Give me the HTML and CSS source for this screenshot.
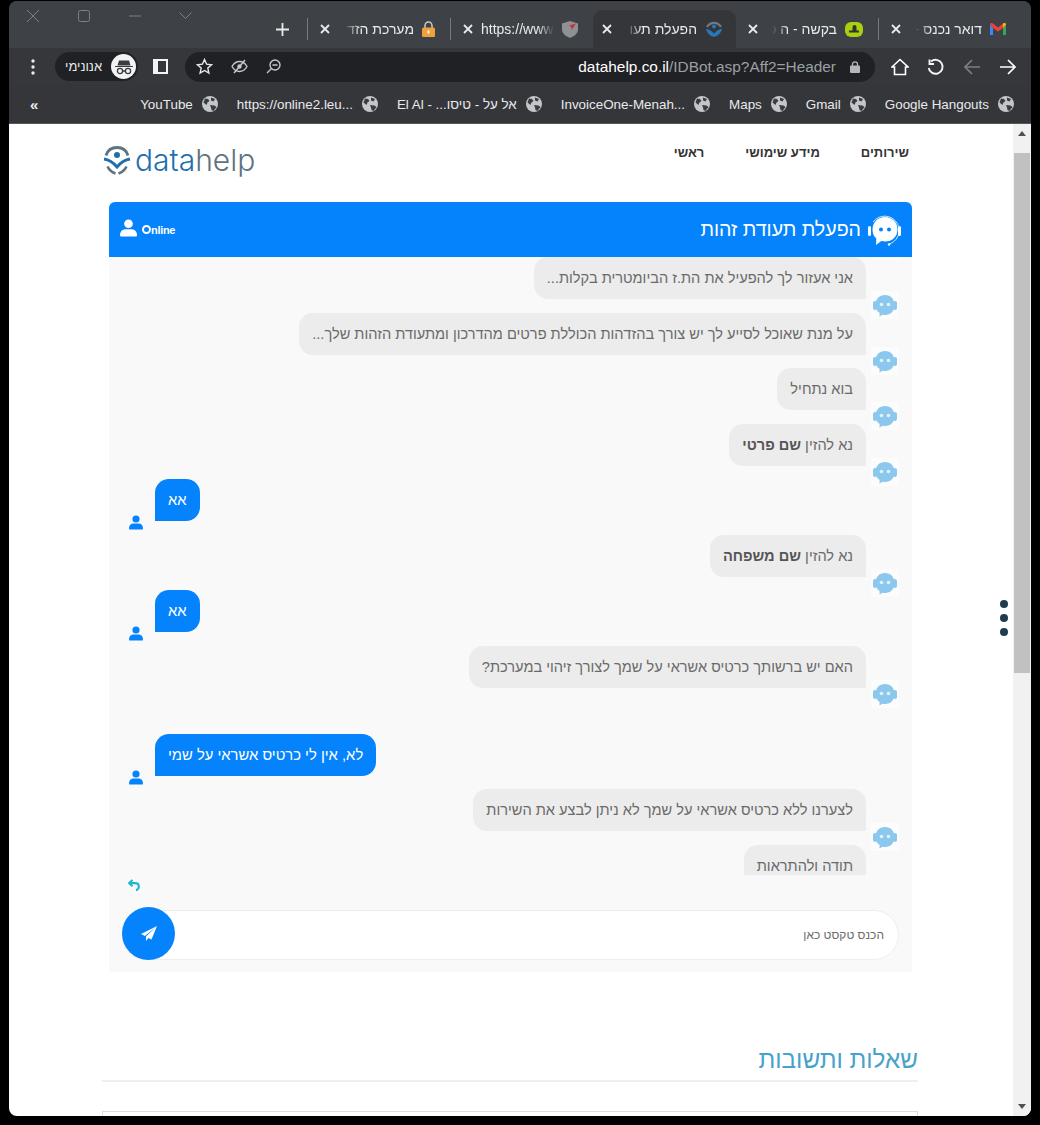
FILE: index.html
```html
<!doctype html>
<html lang="he">
<head>
  <meta charset="utf-8">
  <title>הפעלת תעודת זהות</title>
  <link rel="stylesheet" href="styles.css">
</head>
<body>
  <svg class="defs" width="0" height="0">
    <symbol id="globe" viewBox="0 0 16 16">
      <circle cx="8" cy="8" r="8" fill="#c4c7c9"/>
      <path d="M3 2.500l3 .5 1.500 2-2 1.500-1 2.500-3-2.500zM9 1.500l4 1.500-1.500 2.500-2.500-1zM8 9l4.500 .5 2 1.500-3 4-2-1-.5-2.500z" fill="#3a3c40"/>
    </symbol>
    <symbol id="close" viewBox="0 0 10 10">
      <path d="M1 1l8 8M9 1l-8 8" stroke="#e8eaed" stroke-width="1.800" fill="none"/>
    </symbol>
    <symbol id="bot" viewBox="0 0 28 28">
      <rect width="28" height="28" fill="#fff" opacity=".55"/>
      <rect x="2" y="10" width="4" height="9" rx="2" fill="#8cc8ee"/>
      <rect x="22" y="10" width="4" height="9" rx="2" fill="#8cc8ee"/>
      <path d="M14 4c5.800 0 9.500 4 9.500 10s-3.700 10-9.500 10c-.9 0-1.800-.1-2.600-.3L8.500 25.500l.1-3.400C6 20.300 4.500 17.500 4.500 14 4.500 8 8.200 4 14 4z" fill="#8cc8ee"/>
      <circle cx="10.500" cy="13.500" r="1.800" fill="#e3f1fa"/>
      <circle cx="17.500" cy="13.500" r="1.800" fill="#e3f1fa"/>
    </symbol>
    <symbol id="person" viewBox="0 0 14 15">
      <circle cx="7" cy="4" r="3.600"/>
      <path d="M1 14.500c-.8 0-1-.6-1-1.300C0 10.500 2 8.500 4.500 8.500h5c2.500 0 4.500 2 4.500 4.700 0 .7-.2 1.300-1 1.300z"/>
    </symbol>
  </svg>

  <div class="window">
    <div class="tabstrip">
      <div class="winbtn"><svg width="14" height="14" viewBox="0 0 14 14"><path d="M1 1l12 12M13 1L1 13" stroke="#7d8084" stroke-width="1" fill="none"/></svg></div>
      <div class="winbtn"><svg width="12" height="12" viewBox="0 0 12 12"><rect x=".5" y=".5" width="11" height="11" rx="2" stroke="#7d8084" fill="none"/></svg></div>
      <div class="winbtn"><svg width="12" height="2" viewBox="0 0 12 2"><path d="M0 1h12" stroke="#7d8084"/></svg></div>
      <div class="winbtn"><svg width="13" height="8" viewBox="0 0 13 8"><path d="M.5 .5l6 6 6-6" stroke="#7d8084" fill="none"/></svg></div>
      <div class="strip-space"></div>
      <svg class="plus" width="13" height="13" viewBox="0 0 13 13"><path d="M6.500 0v13M0 6.500h13" stroke="#e8eaed" stroke-width="1.800"/></svg>
      <div class="sep"></div>
      <div class="tab">
        <svg class="tab-x" width="10" height="10"><use href="#close"/></svg>
        <span class="tab-title">מערכת הזד</span>
        <svg width="13" height="16" viewBox="0 0 13 16"><path d="M3 7V4.500a3.500 3.500 0 017 0V7" stroke="#c9cbce" stroke-width="1.500" fill="none"/><rect y="6.500" width="13" height="9.500" rx="1.500" fill="#f0a13a"/><rect x="5.500" y="9.500" width="2" height="3" fill="#fff"/></svg>
      </div>
      <div class="sep"></div>
      <div class="tab">
        <svg class="tab-x" width="10" height="10"><use href="#close"/></svg>
        <span class="tab-title tab-ltr">https://www</span>
        <svg width="16" height="17" viewBox="0 0 16 17"><path d="M0 2.500L8 0l8 2.500v6c0 4-4 7-8 8.500-4-1.500-8-4.500-8-8.500z" fill="#8f9193"/><path d="M1 3.500l6 1 7-2-4 6-2-4z" fill="#c8323a"/></svg>
      </div>
      <div class="tab tab-active">
        <svg class="tab-x" width="10" height="10"><use href="#close"/></svg>
        <span class="tab-title">הפעלת תעו</span>
        <svg width="18" height="18" viewBox="0 0 18 18"><path d="M2 7a8 8 0 0114 0" stroke="#6c7a85" stroke-width="2.200" fill="none"/><circle cx="9" cy="6.500" r="2" fill="#2579b8"/><path d="M1 9c3 0 5 1.500 8 4.500C12 10.500 14 9 17 9c-1 4-4 7-8 8-4-1-7-4-8-8z" fill="#2579b8"/></svg>
      </div>
      <div class="tab">
        <svg class="tab-x" width="10" height="10"><use href="#close"/></svg>
        <span class="tab-title">בקשה - ה ט</span>
        <svg width="18" height="15" viewBox="0 0 18 15"><rect width="18" height="15" rx="6" fill="#a9cf12"/><path d="M4 10.500h10v-2h-2.500V5a2 2 0 00-4 0v3.500H4z" fill="#30352a"/></svg>
      </div>
      <div class="sep"></div>
      <div class="tab tab-last">
        <svg class="tab-x" width="10" height="10"><use href="#close"/></svg>
        <span class="tab-title">דואר נכנס -</span>
        <svg width="16" height="12" viewBox="0 0 16 12"><path d="M0 1.500V12h3V5z" fill="#4285f4"/><path d="M16 1.500V12h-3V5z" fill="#34a853"/><path d="M0 1.500C0 0 1.700-.5 3 .5L8 4.500 13 .5c1.300-1 3-.5 3 1L13 5 8 8.500 3 5z" fill="#ea4335"/><path d="M13 .5c1.300-1 3-.5 3 1L13 5z" fill="#fbbc04"/></svg>
      </div>
    </div>

    <div class="toolbar">
      <svg class="tb-dots" width="4" height="16" viewBox="0 0 4 16"><circle cx="2" cy="2" r="1.700" fill="#e8eaed"/><circle cx="2" cy="8" r="1.700" fill="#e8eaed"/><circle cx="2" cy="14" r="1.700" fill="#e8eaed"/></svg>
      <div class="incognito">
        <span>אנונימי</span>
        <div class="incog-face">
          <svg width="20" height="16" viewBox="0 0 20 16"><path d="M1 7h18v1H1zM5 1.500h10l1.500 5h-13z" fill="#3a3c40"/><circle cx="6" cy="12" r="2.600" stroke="#3a3c40" stroke-width="1.300" fill="none"/><circle cx="14" cy="12" r="2.600" stroke="#3a3c40" stroke-width="1.300" fill="none"/><path d="M8.500 12h3" stroke="#3a3c40" stroke-width="1.300"/></svg>
        </div>
      </div>
      <svg class="tb-panel" width="15" height="15" viewBox="0 0 15 15"><rect width="15" height="15" fill="#f1f3f4"/><rect x="5" y="2" width="8" height="11" fill="#35363a"/></svg>
      <div class="omnibox">
        <svg width="17" height="17" viewBox="0 0 17 17"><path d="M8.500 1.500l2.100 4.700 5 .5-3.800 3.400 1.100 5-4.400-2.600-4.400 2.600 1.100-5L1.400 6.700l5-.5z" stroke="#e8eaed" stroke-width="1.400" fill="none"/></svg>
        <svg width="17" height="17" viewBox="0 0 17 17"><path d="M1 8.500C3 5 5.500 3.500 8.500 3.500S14 5 16 8.500c-2 3.500-4.500 5-7.500 5S3 12 1 8.500z" stroke="#c4c7c9" stroke-width="1.400" fill="none"/><circle cx="8.500" cy="8.500" r="2.200" fill="#c4c7c9"/><path d="M3 15L14 2" stroke="#c4c7c9" stroke-width="1.500"/></svg>
        <svg width="15" height="15" viewBox="0 0 15 15"><circle cx="9" cy="6" r="5" stroke="#c4c7c9" stroke-width="1.400" fill="none"/><path d="M6.500 6h5M5.500 9.500L1 14" stroke="#c4c7c9" stroke-width="1.400"/></svg>
        <div class="url"><b>datahelp.co.il</b>/IDBot.asp?Aff2=Header</div>
        <svg class="url-lock" width="10" height="12" viewBox="0 0 10 12"><path d="M2.500 5V3.300a2.500 2.500 0 015 0V5" stroke="#b4b6b9" stroke-width="1.300" fill="none"/><rect y="4.500" width="10" height="7.500" rx="1" fill="#b4b6b9"/></svg>
      </div>
      <svg class="tb-icon" width="18" height="18" viewBox="0 0 18 18"><path d="M1 9l8-7.500L17 9h-2.500v7.500h-11V9z" stroke="#fff" stroke-width="1.600" fill="none"/></svg>
      <svg class="tb-icon" width="18" height="18" viewBox="0 0 18 18"><path d="M4 3.500a7 7 0 11-2.300 6.500M2.500 1.500v4.500H7" stroke="#f1f3f4" stroke-width="1.900" fill="none"/></svg>
      <svg class="tb-icon" width="18" height="18" viewBox="0 0 18 18"><path d="M17 9H2M9 2L2 9l7 7" stroke="#7c7f83" stroke-width="1.700" fill="none"/></svg>
      <svg class="tb-icon" width="18" height="18" viewBox="0 0 18 18"><path d="M1 9h15M9 2l7 7-7 7" stroke="#fff" stroke-width="1.700" fill="none"/></svg>
    </div>

    <div class="bookmarks">
      <span class="bm-more">«</span>
      <div class="bm-list">
        <a class="bm"><span>YouTube</span><svg width="16" height="16"><use href="#globe"/></svg></a>
        <a class="bm"><span>https://online2.leu...</span><svg width="16" height="16"><use href="#globe"/></svg></a>
        <a class="bm"><span class="bm-rtl">אל על - טיסו... - El Al</span><svg width="16" height="16"><use href="#globe"/></svg></a>
        <a class="bm"><span>InvoiceOne-Menah...</span><svg width="16" height="16"><use href="#globe"/></svg></a>
        <a class="bm"><span>Maps</span><svg width="16" height="16"><use href="#globe"/></svg></a>
        <a class="bm"><span>Gmail</span><svg width="16" height="16"><use href="#globe"/></svg></a>
        <a class="bm"><span>Google Hangouts</span><svg width="16" height="16"><use href="#globe"/></svg></a>
      </div>
    </div>

    <div class="viewport">
      <div class="page">
        <header class="site-head">
          <div class="logo">
            <svg width="29" height="29" viewBox="0 0 29 29">
              <path d="M3 9.500C4.500 4.500 8.500 1.500 14 1.500s9.500 3 11 8" stroke="#5f7380" stroke-width="2.800" fill="none"/>
              <circle cx="14" cy="9" r="3" fill="#1f6fae"/>
              <path d="M1 13c5.500 .8 9.500 3.800 13 8 3.500-4.200 7.500-7.200 13-8" stroke="#1f6fae" stroke-width="2.800" fill="none"/>
              <path d="M4.500 20.500c1.500 3.200 4.200 5.700 8 7M23.500 20.500c-1.500 3.200-4.200 5.700-8 7" stroke="#5f7380" stroke-width="2.600" fill="none"/>
            </svg>
            <span class="logo-text">data<i>help</i></span>
          </div>
          <nav class="site-nav">
            <a>שירותים</a>
            <a>מידע שימושי</a>
            <a>ראשי</a>
          </nav>
        </header>

        <section class="chat">
          <div class="chat-head">
            <div class="agent">
              <svg class="bot-big" width="34" height="32" viewBox="0 0 34 32">
                <path d="M5 8a14.500 14.500 0 0124 1c2.500 4 2.500 10 .5 14-1.500 3-4 5.500-8 7" stroke="#fff" stroke-width=".8" fill="none"/>
                <rect x="0" y="12" width="3" height="10" rx="1.500" fill="#fff"/>
                <rect x="30" y="12" width="3" height="10" rx="1.500" fill="#fff"/>
                <path d="M17 3c7 0 12.500 5 12.500 12.500S24 27.500 17 27.500c-1.300 0-2.500-.2-3.700-.5L8 31l.3-6.500C5.500 22 4.500 19 4.500 15.500 4.500 8 10 3 17 3z" fill="#fff"/>
                <circle cx="13" cy="15.500" r="2" fill="#0483fd"/>
                <circle cx="21" cy="15.500" r="2" fill="#0483fd"/>
                <circle cx="21" cy="30.500" r="1.200" fill="#fff"/>
              </svg>
              <h1>הפעלת תעודת זהות</h1>
            </div>
            <div class="status">
              <svg class="status-me" width="17" height="20" viewBox="0 0 14 15"><use href="#person"/></svg>
              <span class="status-text"><span class="status-o"></span>nline</span>
            </div>
          </div>

          <div class="chat-list">
            <div class="msg msg-peek"><svg class="msg-ava" width="28" height="28"><use href="#bot"/></svg></div>
            <div class="msg">
              <svg class="msg-ava" width="28" height="28"><use href="#bot"/></svg>
              <div class="bubble">אני אעזור לך להפעיל את הת.ז הביומטרית בקלות...</div>
            </div>
            <div class="msg">
              <svg class="msg-ava" width="28" height="28"><use href="#bot"/></svg>
              <div class="bubble">על מנת שאוכל לסייע לך יש צורך בהזדהות הכוללת פרטים מהדרכון ומתעודת הזהות שלך...</div>
            </div>
            <div class="msg">
              <svg class="msg-ava" width="28" height="28"><use href="#bot"/></svg>
              <div class="bubble">בוא נתחיל</div>
            </div>
            <div class="msg">
              <svg class="msg-ava" width="28" height="28"><use href="#bot"/></svg>
              <div class="bubble">נא להזין <b>שם פרטי</b></div>
            </div>
            <div class="msg msg-user">
              <div class="bubble">אא</div>
              <svg class="msg-me" width="14" height="15" viewBox="0 0 14 15"><use href="#person"/></svg>
            </div>
            <div class="msg">
              <svg class="msg-ava" width="28" height="28"><use href="#bot"/></svg>
              <div class="bubble">נא להזין <b>שם משפחה</b></div>
            </div>
            <div class="msg msg-user">
              <div class="bubble">אא</div>
              <svg class="msg-me" width="14" height="15" viewBox="0 0 14 15"><use href="#person"/></svg>
            </div>
            <div class="msg msg-long">
              <svg class="msg-ava" width="28" height="28"><use href="#bot"/></svg>
              <div class="bubble">האם יש ברשותך כרטיס אשראי על שמך לצורך זיהוי במערכת?</div>
            </div>
            <div class="msg msg-user">
              <div class="bubble">לא, אין לי כרטיס אשראי על שמי</div>
              <svg class="msg-me" width="14" height="15" viewBox="0 0 14 15"><use href="#person"/></svg>
            </div>
            <div class="msg">
              <svg class="msg-ava" width="28" height="28"><use href="#bot"/></svg>
              <div class="bubble">לצערנו ללא כרטיס אשראי על שמך לא ניתן לבצע את השירות</div>
            </div>
            <div class="msg">
              <div class="bubble bubble-last">תודה ולהתראות</div>
            </div>
          </div>

          <div class="chat-back">
            <svg width="12" height="12" viewBox="0 0 12 12"><path d="M4.500 1L1.200 4.200l3.300 3M1.500 4.200h5.500c2.500 0 3.800 1.500 3.800 3.300S9.500 11 8 11" stroke="#1fb9cf" stroke-width="2.200" fill="none"/></svg>
          </div>

          <form class="chat-form">
            <div class="chat-input">הכנס טקסט כאן</div>
            <button class="send" type="button">
              <svg width="16" height="15" viewBox="0 0 16 15"><path d="M16 0L0 8l4 2zM16 0L5 10.500V15l2.500-3 3 1.500z" fill="#fff"/></svg>
            </button>
          </form>
        </section>

        <section class="faq">
          <h2>שאלות ותשובות</h2>
          <div class="faq-box"></div>
        </section>

        <div class="page-dots"><i></i><i></i><i></i></div>
      </div>

      <div class="scrollbar">
        <div class="sb-arrow sb-up"></div>
        <div class="sb-thumb"></div>
        <div class="sb-arrow sb-down"></div>
      </div>
    </div>
  </div>
</body>
</html>
```

FILE: styles.css
```css
html {
  font-family: "Liberation Sans", Arial, sans-serif;
  font-size: 15px;
}

body {
  margin: 0;
  background-color: #000;
  height: 1125px;
  overflow: hidden;
}

.defs {
  position: absolute;
}

.window {
  margin: 1px 9px 0;
  height: 1115px;
  display: flex;
  flex-direction: column;
  border-radius: 8px;
  overflow: hidden;
  background-color: #35363a;
}

/* tabs */
.tabstrip {
  height: 47px;
  flex: none;
  display: flex;
  align-items: flex-end;
  background-color: #3e4145;
  color: #e8eaed;
  font-size: 14px;
}

.winbtn {
  width: 51px;
  height: 47px;
  padding-bottom: 17px;
  box-sizing: border-box;
  display: flex;
  align-items: center;
  justify-content: center;
  flex: none;
}

.winbtn:first-child {
  margin-left: -2px;
}

.strip-space {
  flex: 1;
}

.plus {
  margin: 0 18px 12px 0;
}

.sep {
  width: 1px;
  height: 22px;
  margin-bottom: 8px;
  background-color: #77797c;
}

.tab {
  width: 132px;
  height: 38px;
  margin: 0 5px;
  padding: 0 10px 0 7px;
  box-sizing: border-box;
  display: flex;
  align-items: center;
  gap: 8px;
  flex: none;
}

.tab-active {
  width: 143px;
  margin: 0;
  border-radius: 10px 10px 0 0;
  background-color: #35363a;
  padding: 0 13px 0 9px;
}

.tab-last {
  margin-right: 15px;
}

.tab-x {
  flex: none;
}

.tab-title {
  flex: 1;
  white-space: nowrap;
  direction: rtl;
  -webkit-mask-image: linear-gradient(to right, transparent 6px, #000 22px);
  mask-image: linear-gradient(to right, transparent 6px, #000 22px);
}

.tab-ltr {
  direction: ltr;
  -webkit-mask-image: linear-gradient(to left, transparent, #000 16px);
  mask-image: linear-gradient(to left, transparent, #000 16px);
}

/* toolbar */
.toolbar {
  height: 37px;
  flex: none;
  display: flex;
  align-items: center;
  padding-left: 22px;
  background-color: #36373b;
}

.tb-dots {
  margin-right: 20px;
}

.incognito {
  width: 83px;
  height: 29px;
  padding: 0 2px 0 10px;
  box-sizing: border-box;
  border-radius: 15px;
  background-color: #202124;
  color: #e8eaed;
  font-size: 13px;
  display: flex;
  align-items: center;
  justify-content: space-between;
  flex: none;
}

.incog-face {
  width: 25px;
  height: 25px;
  border-radius: 50%;
  background-color: #f1f3f4;
  display: flex;
  align-items: center;
  justify-content: center;
}

.tb-panel {
  margin: 0 17px 0 15px;
  flex: none;
}

.omnibox {
  width: 690px;
  height: 30px;
  padding: 0 15px 0 11px;
  box-sizing: border-box;
  border-radius: 15px;
  background-color: #202124;
  display: flex;
  align-items: center;
  gap: 18px;
  flex: none;
}

.url {
  flex: 1;
  text-align: right;
  font-size: 15.4px;
  color: #9aa0a6;
  white-space: nowrap;
}

.url b {
  font-weight: 400;
  color: #fff;
}

.url-lock {
  margin-left: -4px;
}

.tb-icon {
  margin-left: 17px;
  flex: none;
}

.tb-icon + .tb-icon {
  margin-left: 18px;
}

.omnibox + .tb-icon {
  margin-left: 16px;
}

/* bookmarks */
.bookmarks {
  height: 38px;
  flex: none;
  display: flex;
  align-items: center;
  justify-content: space-between;
  padding: 0 17px 0 21px;
  border-bottom: 1px solid #55575a;
  color: #e8eaed;
  font-size: 13.4px;
}

.bm-more {
  font-size: 15px;
  font-weight: 700;
}

.bm-list {
  display: flex;
  gap: 19px;
}

.bm {
  display: flex;
  align-items: center;
  gap: 9px;
  white-space: nowrap;
}

.bm-rtl {
  direction: rtl;
}

/* page */
.viewport {
  flex: 1;
  display: flex;
  min-height: 0;
  background-color: #fff;
}

.page {
  flex: 1;
  position: relative;
  overflow: hidden;
  direction: rtl;
}

.site-head {
  height: 78px;
  padding: 0 104px 0 94px;
  display: flex;
  flex-direction: row-reverse;
  justify-content: space-between;
  align-items: flex-start;
}

.logo {
  direction: ltr;
  display: flex;
  align-items: center;
  gap: 3px;
  margin-top: 21px;
}

.logo-text {
  font-family: Inter, sans-serif;
  font-weight: 300;
  font-size: 30px;
  line-height: 30px;
  color: #1f6fae;
}

.logo-text i {
  font-style: normal;
  color: #5f7380;
}

.site-nav {
  display: flex;
  gap: 41px;
  margin-top: 21px;
  font-size: 13px;
  font-weight: 700;
  color: #333;
}

/* chat */
.chat {
  width: 803px;
  margin: 0 auto 0 100px;
  background-color: #f9f9f9;
}

.chat-head {
  height: 55px;
  padding: 0 10px 0 11px;
  border-radius: 6px 6px 0 0;
  background-color: #0483fd;
  color: #fff;
  display: flex;
  align-items: center;
  justify-content: space-between;
}

.agent {
  display: flex;
  align-items: center;
  gap: 7px;
}

.bot-big {
  flex: none;
}

.chat-head h1 {
  font-size: 19.6px;
  font-weight: 400;
  margin: 0;
}

.status {
  direction: ltr;
  display: flex;
  align-items: center;
  gap: 5px;
}

.status-me {
  fill: #fff;
  margin-bottom: 4px;
}

.status-text {
  font-size: 11px;
  font-weight: 700;
  letter-spacing: -.3px;
  display: flex;
  align-items: center;
}

.status-o {
  width: 5px;
  height: 5px;
  border: 2px solid #fff;
  border-radius: 50%;
}

.chat-list {
  height: 618px;
  overflow: hidden;
  padding: 0 13px 0 0;
  display: flex;
  flex-direction: column;
}

.msg {
  height: 55.5px;
  display: flex;
  align-items: flex-start;
  flex: none;
}

.msg-peek {
  height: 30px;
  margin-top: -30px;
}

.msg-peek .msg-ava {
  margin-top: 5px;
}

.msg-ava {
  flex: none;
  margin-top: 34px;
  margin-left: 5px;
}

.msg-long {
  height: 88px;
}

.bubble {
  padding: 0 13px;
  height: 42px;
  line-height: 42px;
  box-sizing: border-box;
  background-color: #ececec;
  border-radius: 14px 14px 0 14px;
  color: #6a6a6a;
  font-size: 14.6px;
  white-space: nowrap;
}

.bubble b {
  color: #555;
}

.bubble-last {
  margin-right: 33px;
}

.msg-user {
  justify-content: flex-end;
  padding-left: 20px;
}

.msg-user .bubble {
  background-color: #0483fd;
  color: #fff;
  font-size: 14.8px;
  border-radius: 14px 14px 14px 0;
}

.msg-me {
  flex: none;
  fill: #0483fd;
  margin: 36px 12px 0 0;
}

.chat-back {
  height: 34px;
  padding-right: 772px;
  display: flex;
  align-items: flex-start;
  padding-top: 4px;
  box-sizing: border-box;
}

.chat-form {
  height: 63px;
  margin: 0;
  padding: 0 13px;
  display: flex;
  align-items: flex-start;
}

.chat-input {
  flex: 1;
  height: 50px;
  margin-top: 1px;
  padding-right: 14px;
  box-sizing: border-box;
  line-height: 48px;
  background-color: #fff;
  border: 1px solid #eee;
  border-radius: 25px;
  font-size: 12px;
  color: #6b6b6b;
}

.send {
  width: 53px;
  height: 53px;
  margin: -2px -53px 0 0;
  padding: 0;
  border: 0;
  border-radius: 50%;
  background-color: #0483fd;
  display: flex;
  align-items: center;
  justify-content: center;
  position: relative;
}

/* faq */
.faq {
  margin: 0 95px 0 93px;
  padding-top: 73px;
}

.faq h2 {
  margin: 0;
  padding-bottom: 6px;
  font-size: 24.3px;
  line-height: 29px;
  font-weight: 400;
  color: #47a3c9;
  border-bottom: 2px solid #eee;
}

.faq-box {
  margin-top: 29px;
  height: 40px;
  border: 1px solid #ddd;
}

.page-dots {
  position: absolute;
  left: 991px;
  top: 476px;
  display: flex;
  flex-direction: column;
  gap: 6px;
}

.page-dots i {
  width: 8px;
  height: 8px;
  border-radius: 50%;
  background-color: #213b4e;
}

/* scrollbar */
.scrollbar {
  width: 18px;
  flex: none;
  background-color: #f1f1f1;
  display: flex;
  flex-direction: column;
  align-items: center;
}

.sb-arrow {
  width: 0;
  height: 0;
  border-left: 4px solid transparent;
  border-right: 4px solid transparent;
}

.sb-up {
  margin-top: 7px;
  border-bottom: 5px solid #505050;
}

.sb-down {
  margin-top: 431px;
  border-top: 5px solid #505050;
}

.sb-thumb {
  width: 16px;
  height: 520px;
  margin-top: 17px;
  background-color: #c1c1c1;
}
```
